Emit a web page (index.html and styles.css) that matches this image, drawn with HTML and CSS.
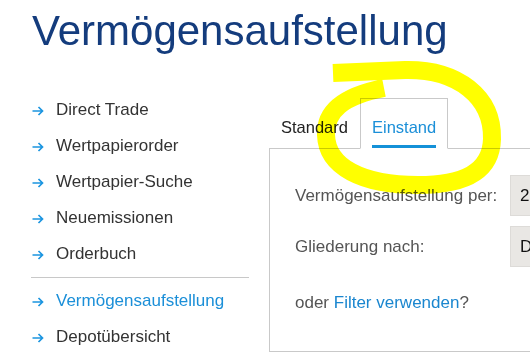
FILE: index.html
```html
<!DOCTYPE html>
<html lang="de">
<head>
    <meta charset="UTF-8">
    <meta name="viewport" content="width=device-width, initial-scale=1.0">
    <title>Vermögensaufstellung</title>
    <link rel="stylesheet" href="styles.css">
</head>
<body>
    <div class="page">
        <h1 class="title">Vermögensaufstellung</h1>

        <div class="layout">
            <nav class="side-nav">
                <ul class="nav-list">
                    <li><a class="nav-link" href="#"><svg class="arrow" viewBox="0 0 12 10"><path d="M0.5 5H10.5M6.5 1L10.5 5L6.5 9"/></svg>Direct Trade</a></li>
                    <li><a class="nav-link" href="#"><svg class="arrow" viewBox="0 0 12 10"><path d="M0.5 5H10.5M6.5 1L10.5 5L6.5 9"/></svg>Wertpapierorder</a></li>
                    <li><a class="nav-link" href="#"><svg class="arrow" viewBox="0 0 12 10"><path d="M0.5 5H10.5M6.5 1L10.5 5L6.5 9"/></svg>Wertpapier-Suche</a></li>
                    <li><a class="nav-link" href="#"><svg class="arrow" viewBox="0 0 12 10"><path d="M0.5 5H10.5M6.5 1L10.5 5L6.5 9"/></svg>Neuemissionen</a></li>
                    <li><a class="nav-link" href="#"><svg class="arrow" viewBox="0 0 12 10"><path d="M0.5 5H10.5M6.5 1L10.5 5L6.5 9"/></svg>Orderbuch</a></li>
                </ul>
                <hr class="nav-divider">
                <ul class="nav-list">
                    <li><a class="nav-link current" href="#"><svg class="arrow" viewBox="0 0 12 10"><path d="M0.5 5H10.5M6.5 1L10.5 5L6.5 9"/></svg>Vermögensaufstellung</a></li>
                    <li><a class="nav-link" href="#"><svg class="arrow" viewBox="0 0 12 10"><path d="M0.5 5H10.5M6.5 1L10.5 5L6.5 9"/></svg>Depotübersicht</a></li>
                </ul>
            </nav>

            <main class="content">
                <div class="tabs">
                    <a class="tab" href="#"><span class="tab-label">Standard</span></a>
                    <a class="tab active" href="#"><span class="tab-label">Einstand</span></a>
                </div>
                <div class="panel">
                    <div class="form-row">
                        <span class="form-label">Vermögensaufstellung per:</span>
                        <div class="select">27.03.2024</div>
                    </div>
                    <div class="form-row">
                        <span class="form-label">Gliederung nach:</span>
                        <div class="select">Depot</div>
                    </div>
                    <p class="filter-hint">oder <a href="#">Filter verwenden</a>?</p>
                </div>
            </main>
        </div>
    </div>

    <!-- marker scribble on top of the screenshot -->
    <svg class="highlight" viewBox="0 0 530 361">
        <path d="M333 73L405 70C458 69 493 97 492 139C491 173 462 185 418 185C362 185 327 167 326 135C325 111 343 96 384 88"/>
    </svg>
</body>
</html>
```

FILE: styles.css
```css
html, body {
    margin: 0;
    padding: 0;
    overflow: hidden;
}
body {
    font-family: "Liberation Sans", Arial, sans-serif;
    background-color: #fff;
    color: #333;
    position: relative;
}
.page {
    padding-left: 31px;
}
.title {
    margin: 6px 0 0 1px;
    font-size: 42px;
    line-height: 50px;
    font-weight: normal;
    color: #143c7d;
}
.layout {
    display: flex;
    gap: 20px;
    margin-top: 36px;
}
.side-nav {
    width: 218px;
    flex-shrink: 0;
}
.nav-list {
    list-style: none;
    margin: 0;
    padding: 0;
}
.nav-link {
    display: flex;
    align-items: center;
    height: 36px;
    font-size: 17px;
    color: #333;
    text-decoration: none;
}
.nav-link.current {
    color: #1b8fd8;
}
.arrow {
    flex-shrink: 0;
    width: 12px;
    height: 10px;
    margin: 2px 12px 0 1px;
    fill: none;
    stroke: #1b95e0;
    stroke-width: 1.7;
}
.nav-divider {
    border: 0;
    border-top: 1px solid #c8c8c8;
    margin: 5px 0;
}
.content {
    width: 420px;
    flex-shrink: 0;
    margin-top: 6px;
}
.tabs {
    display: flex;
    border-bottom: 1px solid #c9c9c9;
}
.tab {
    padding: 18px 11px 0;
    border: 1px solid transparent;
    border-bottom: 0;
    font-size: 16.5px;
    color: #222;
    text-decoration: none;
}
.tab-label {
    display: block;
    line-height: 20px;
    padding-bottom: 8px;
    border-bottom: 3px solid transparent;
}
.tab.active {
    border-color: #c9c9c9;
    border-bottom: 1px solid #fff;
    margin-bottom: -1px;
    background-color: #fff;
    color: #1b8fd8;
}
.tab.active .tab-label {
    border-bottom-color: #1491d8;
}
.panel {
    border-left: 1px solid #c9c9c9;
    border-bottom: 1px solid #c9c9c9;
    padding: 26px 0 38px 25px;
}
.form-row {
    display: flex;
    align-items: center;
    height: 41px;
    font-size: 17px;
}
.form-row + .form-row {
    margin-top: 10px;
}
.form-label {
    width: 215px;
    color: #555;
}
.select {
    width: 160px;
    height: 41px;
    box-sizing: border-box;
    display: flex;
    align-items: center;
    padding-left: 9px;
    background-color: #e9e7e4;
    border: 1px solid #dddbd8;
    color: #111;
}
.filter-hint {
    margin: 26px 0 0;
    line-height: 20px;
    font-size: 17px;
    color: #555;
}
.filter-hint a {
    color: #1a86cf;
    text-decoration: none;
}
.highlight {
    position: absolute;
    top: 0;
    left: 0;
    width: 530px;
    height: 361px;
    pointer-events: none;
    fill: none;
    stroke: #ffff00;
    stroke-width: 18;
    mix-blend-mode: multiply;
}
```
